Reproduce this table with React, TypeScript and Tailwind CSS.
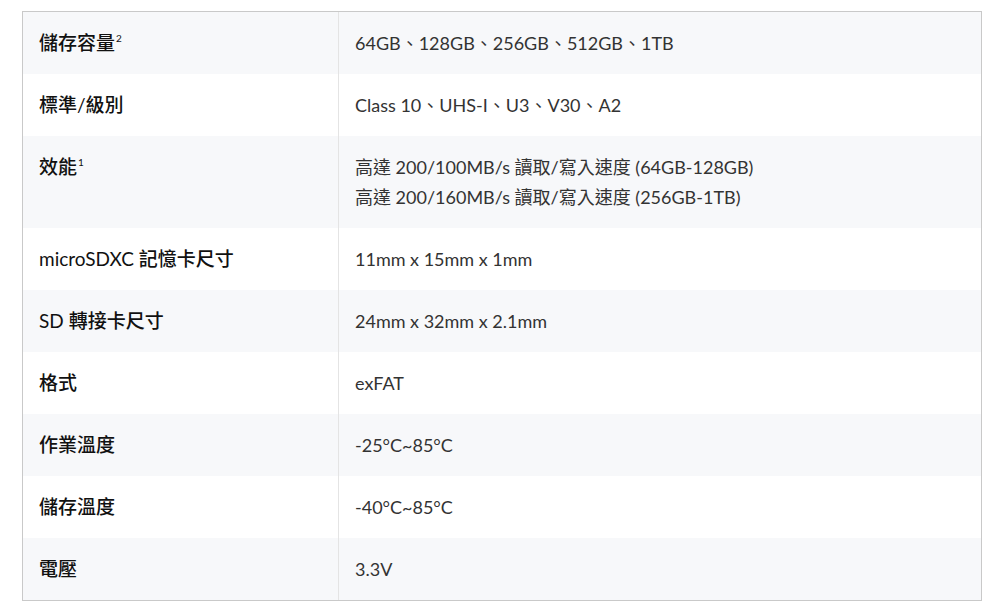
import React from 'react';

type Spec = { label: React.ReactNode; value: React.ReactNode };

// CJK part of a label: medium weight, latin stays regular
const B = ({ children }: { children: React.ReactNode }) => (
  <span className="font-medium">{children}</span>
);

const Sup = ({ n }: { n: string }) => (
  <sup className="text-[10px] font-normal ml-[1px] relative -top-[8px]">{n}</sup>
);

const specs: Spec[] = [
  { label: <><B>儲存容量</B><Sup n="2" /></>, value: '64GB、128GB、256GB、512GB、1TB' },
  { label: <><B>標準</B>/<B>級別</B></>, value: 'Class 10、UHS-I、U3、V30、A2' },
  {
    label: <><B>效能</B><Sup n="1" /></>,
    value: (
      <>
        <div>高達 200/100MB/s 讀取/寫入速度 (64GB-128GB)</div>
        <div>高達 200/160MB/s 讀取/寫入速度 (256GB-1TB)</div>
      </>
    ),
  },
  { label: <>microSDXC <B>記憶卡尺寸</B></>, value: '11mm x 15mm x 1mm' },
  { label: <>SD <B>轉接卡尺寸</B></>, value: '24mm x 32mm x 2.1mm' },
  { label: <B>格式</B>, value: 'exFAT' },
  { label: <B>作業溫度</B>, value: '-25°C~85°C' },
  { label: <B>儲存溫度</B>, value: '-40°C~85°C' },
  { label: <B>電壓</B>, value: '3.3V' },
];

const App = () => {
  return (
    <div
      className="min-h-screen bg-white pt-[11px] pl-[22px]"
      style={{ fontFamily: 'Lato, "Noto Sans CJK TC", sans-serif' }}
    >
      <div className="w-[960px] border border-[#c9c9c9]">
        {specs.map((row, i) => (
          <div
            key={i}
            className={`grid grid-cols-[316px_1fr] ${i % 2 === 0 ? 'bg-[#f7f8fa]' : 'bg-white'}`}
          >
            <div className="border-r border-[#e4e4e4] px-4 py-4 text-[19px] leading-[30px] font-normal text-[#111111]">
              {row.label}
            </div>
            <div className="px-4 py-4 text-[18px] leading-[30px] text-[#333333]">
              {row.value}
            </div>
          </div>
        ))}
      </div>
    </div>
  );
};

export default App;
